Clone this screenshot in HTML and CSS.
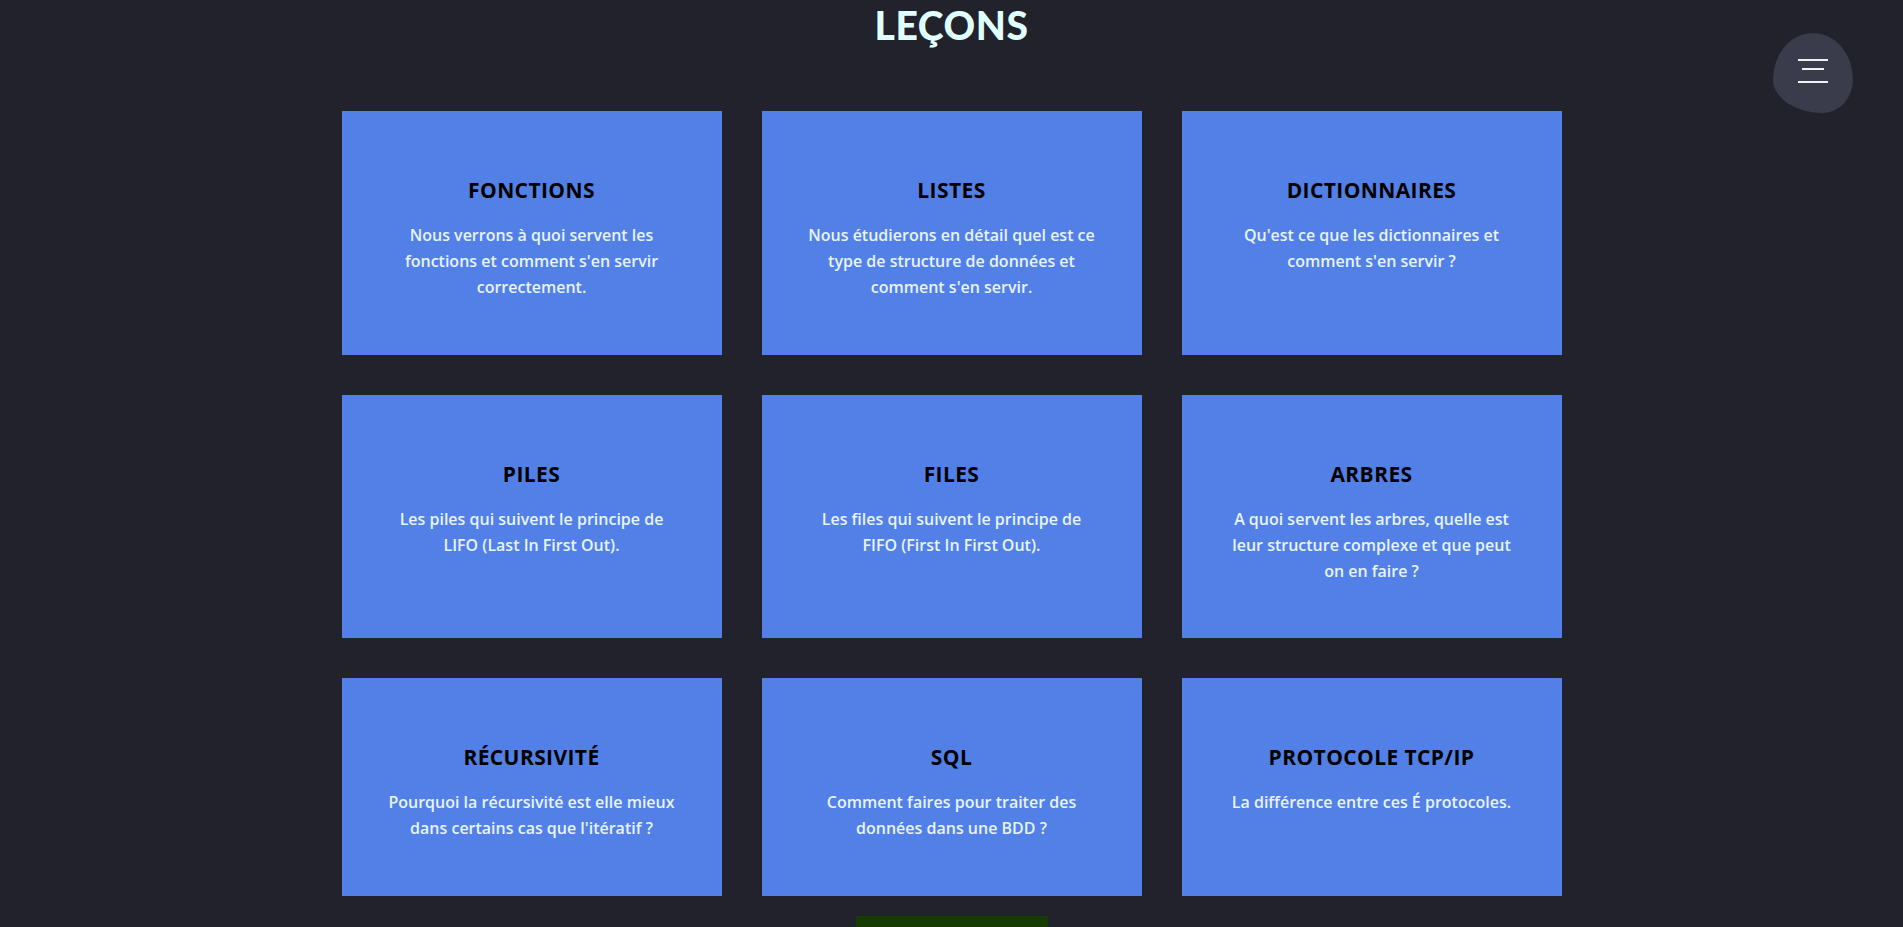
FILE: index.html
```html
<!DOCTYPE html>
<html lang="fr">
<head>
<meta charset="utf-8">
<title>Leçons</title>
<link rel="stylesheet" href="styles.css">
</head>
<body>
<button class="menu-btn" aria-label="Menu">
  <span class="bar bar-long"></span>
  <span class="bar bar-short"></span>
  <span class="bar bar-long bar-last"></span>
</button>
<main class="page">
  <h1 class="page-title">LEÇONS</h1>
  <section class="lessons">
    <article class="card">
      <h2 class="card-title">FONCTIONS</h2>
      <p class="card-text">Nous verrons à quoi servent les fonctions et comment s'en servir correctement.</p>
    </article>
    <article class="card">
      <h2 class="card-title">LISTES</h2>
      <p class="card-text">Nous étudierons en détail quel est ce type de structure de données et comment s'en servir.</p>
    </article>
    <article class="card">
      <h2 class="card-title">DICTIONNAIRES</h2>
      <p class="card-text">Qu'est ce que les dictionnaires et comment s'en servir ?</p>
    </article>
    <article class="card">
      <h2 class="card-title">PILES</h2>
      <p class="card-text">Les piles qui suivent le principe de LIFO (Last In First Out).</p>
    </article>
    <article class="card">
      <h2 class="card-title">FILES</h2>
      <p class="card-text">Les files qui suivent le principe de FIFO (First In First Out).</p>
    </article>
    <article class="card">
      <h2 class="card-title">ARBRES</h2>
      <p class="card-text">A quoi servent les arbres, quelle est leur structure complexe et que peut on en faire ?</p>
    </article>
    <article class="card">
      <h2 class="card-title">RÉCURSIVITÉ</h2>
      <p class="card-text">Pourquoi la récursivité est elle mieux dans certains cas que l'itératif ?</p>
    </article>
    <article class="card">
      <h2 class="card-title">SQL</h2>
      <p class="card-text">Comment faires pour traiter des données dans une BDD ?</p>
    </article>
    <article class="card">
      <h2 class="card-title">PROTOCOLE TCP/IP</h2>
      <p class="card-text">La différence entre ces É protocoles.</p>
    </article>
  </section>
  <div class="more-wrap">
    <a class="more-btn" href="#"></a>
  </div>
</main>
</body>
</html>
```
FILE: styles.css
```css
html, body {
  margin: 0;
  padding: 0;
  background: #21222b;
}

body {
  font-family: "Open Sans", "Noto Sans", sans-serif;
}

.page {
  display: flex;
  flex-direction: column;
  align-items: center;
}

.page-title {
  margin: 2px 0 0;
  font-family: Lato, "Open Sans", sans-serif;
  font-weight: 900;
  font-size: 39px;
  line-height: 47px;
  color: #e0ffff;
  letter-spacing: 0.6px;
}

.lessons {
  margin-top: 62px;
  display: grid;
  grid-template-columns: repeat(3, 380px);
  gap: 40px;
}

.card {
  background: #5380e6;
  padding: 67px 44px 54.5px;
  text-align: center;
}

.card-title {
  margin: 0;
  font-size: 21px;
  line-height: 24px;
  font-weight: 700;
  letter-spacing: 0.4px;
  color: #000;
}

.card-text {
  margin: 20px 0 0;
  font-size: 16px;
  line-height: 26px;
  font-weight: 600;
  color: #e6f4ff;
}

.more-wrap {
  margin-top: 20px;
  display: flex;
  justify-content: center;
}

.more-btn {
  display: block;
  width: 192px;
  height: 50px;
  background: #163c02;
}

.menu-btn {
  position: fixed;
  top: 33px;
  right: 50px;
  width: 80px;
  height: 80px;
  border: none;
  padding: 0;
  background: #3a3b4b;
  border-radius: 50% 50% 38% 62% / 58% 58% 42% 42%;
  display: flex;
  flex-direction: column;
  align-items: center;
  justify-content: flex-start;
  padding-top: 26px;
  box-sizing: border-box;
  cursor: pointer;
}

.bar {
  display: block;
  height: 2px;
  background: #efeff4;
}

.bar-long {
  width: 30px;
}

.bar-short {
  width: 22px;
  margin-top: 7px;
}

.bar-last {
  margin-top: 11px;
}
```
